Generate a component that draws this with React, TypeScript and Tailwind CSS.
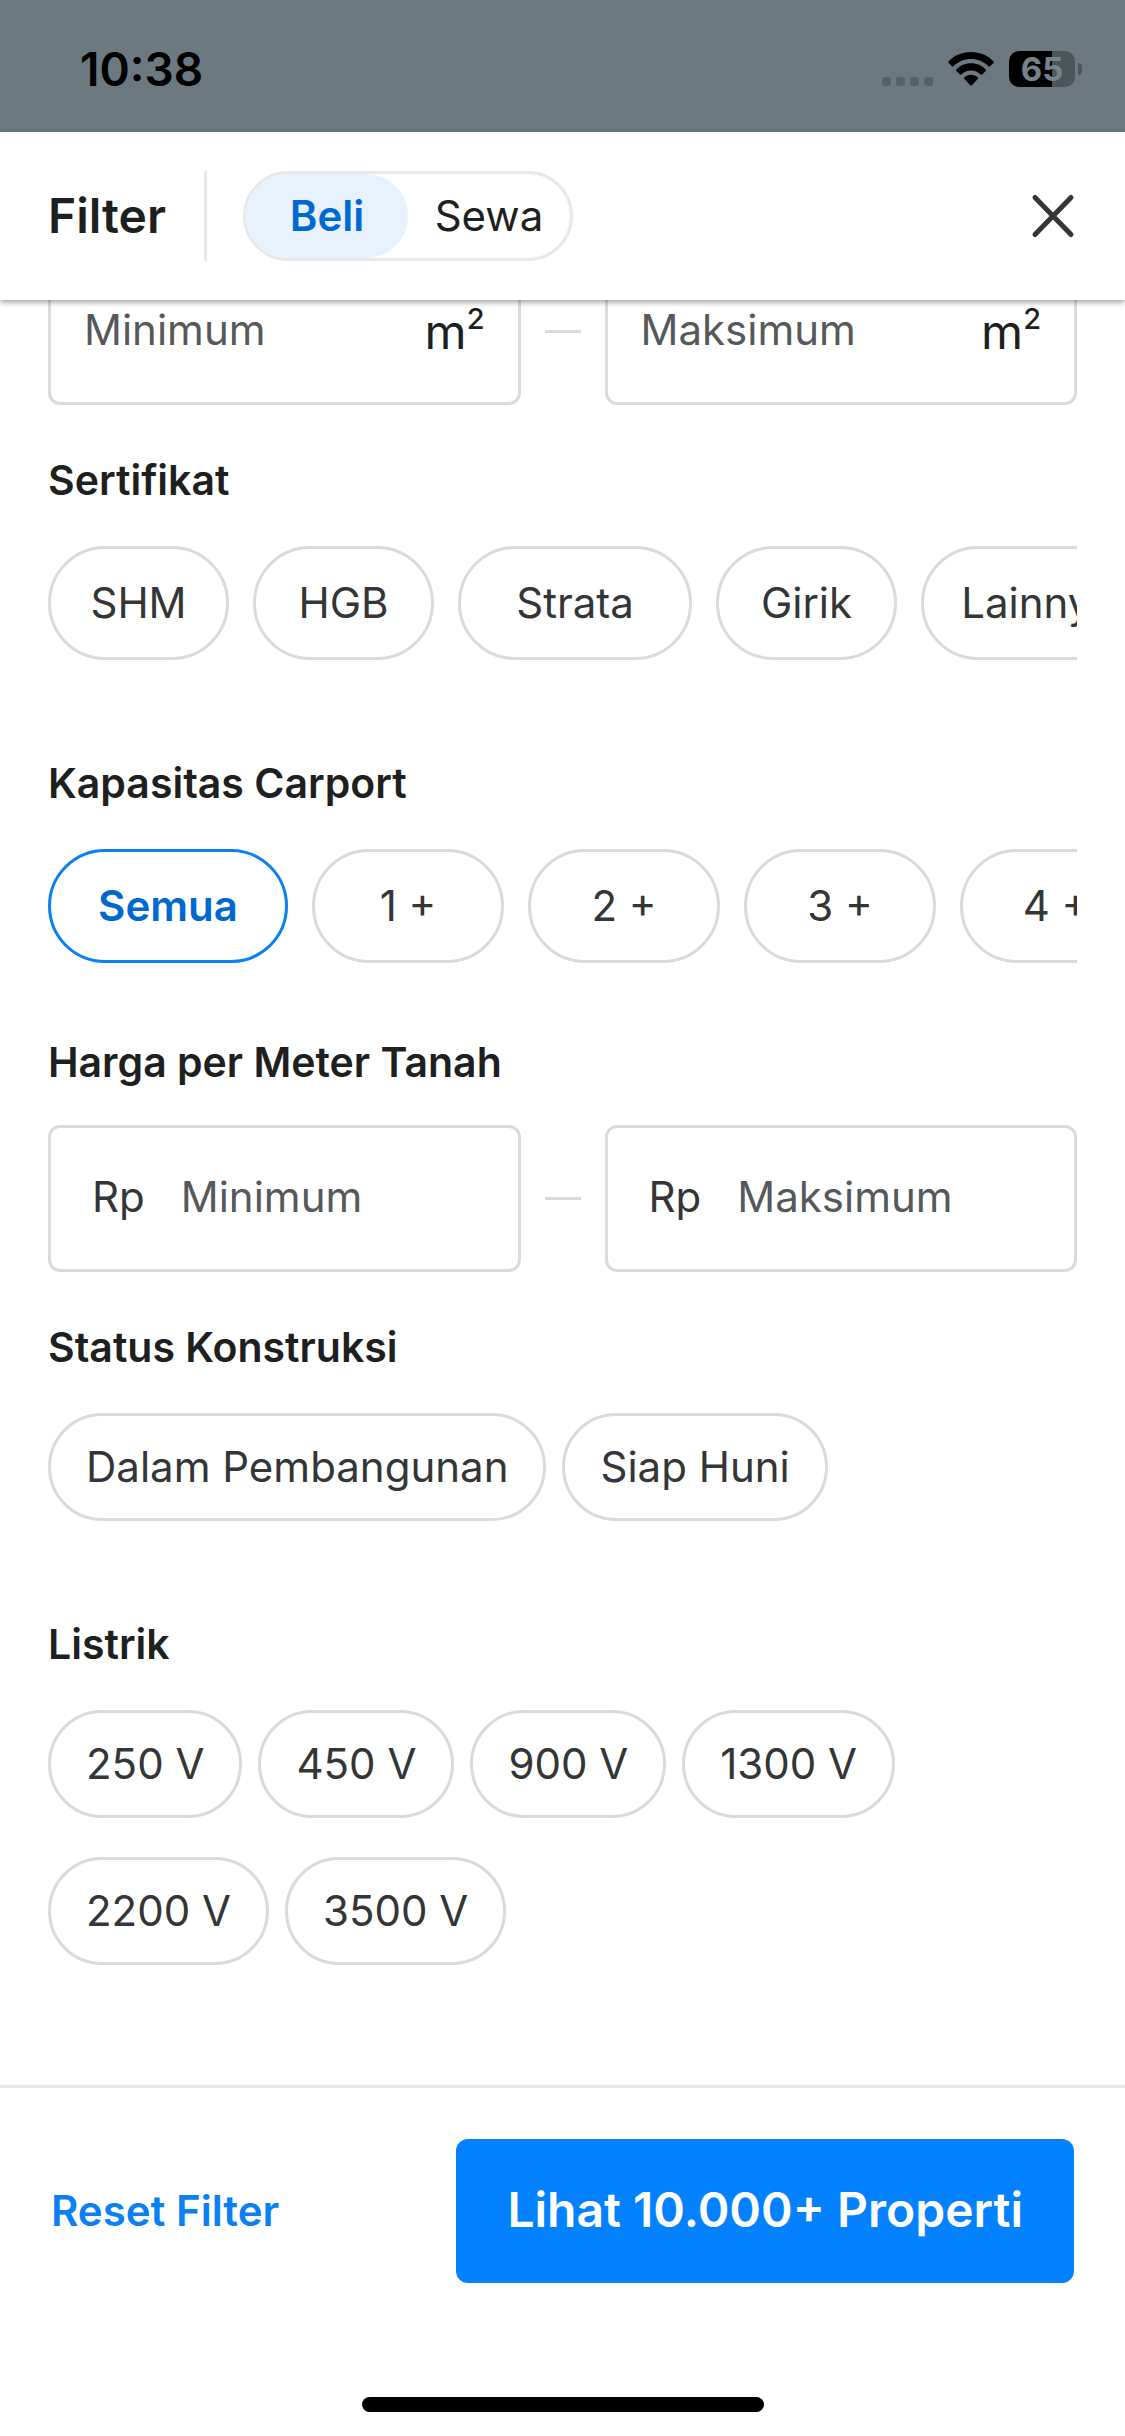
import { useState } from "react";

type Size = "short" | "long" | "all" | "count" | "auto";

const sizeClass: Record<Size, string> = {
  short: "h-[114px] w-[181px]",
  long: "h-[114px] w-[234px]",
  all: "h-[114px] w-60",
  count: "h-[114px] w-48",
  auto: "h-27 px-[35px]",
};

function Chip({
  label,
  size = "auto",
  active,
  onClick,
}: {
  label: string;
  size?: Size;
  active: boolean;
  onClick: () => void;
}) {
  const tone = active
    ? "border-[#0b80f0] font-semibold text-[#0069d1]"
    : "border-[#d9dbdc] text-[#333536]";
  return (
    <button
      type="button"
      aria-pressed={active}
      onClick={onClick}
      className={`shrink-0 rounded-full border-3 whitespace-nowrap ${sizeClass[size]} ${tone}`}
    >
      {label}
    </button>
  );
}

function Heading({ children }: { children: string }) {
  return <h2 className="text-[41px] leading-[60px] font-semibold text-[#1e1f1f]">{children}</h2>;
}

function AmountField({ label, prefix, area }: { label: string; prefix?: string; area?: boolean }) {
  return (
    <label
      className={`flex h-[147px] min-w-0 flex-1 items-center rounded-xl border-3 border-[#d9dbdc] pb-1 ${
        prefix ? "gap-9 px-[41px]" : "px-[33px]"
      }`}
    >
      {prefix && <span className="text-[#333536]">{prefix}</span>}
      <input
        type="text"
        inputMode="numeric"
        aria-label={label}
        placeholder={label}
        className="w-full min-w-0 flex-1 bg-transparent text-[#1e1f1f] outline-none placeholder:text-[#56595b]"
      />
      {area && (
        <span className="pt-1 text-5xl text-[#1e1f1f]">
          m<sup className="-top-5 text-[29px] font-medium">2</sup>
        </span>
      )}
    </label>
  );
}

function RangeFields({ prefix, area }: { prefix?: string; area?: boolean }) {
  return (
    <div className="flex items-center gap-6">
      <AmountField label="Minimum" prefix={prefix} area={area} />
      <span className="h-[3px] w-9 bg-[#d9dbdc]" />
      <AmountField label="Maksimum" prefix={prefix} area={area} />
    </div>
  );
}

function StatusBar() {
  return (
    <div className="flex h-33 items-center justify-between bg-[#6c7980] pr-[43px] pl-20">
      <span className="pt-1.5 text-[46px] leading-none font-semibold text-black">10:38</span>
      <div className="flex items-center pt-1.5">
        <div className="mt-6 mr-[15px] flex gap-[5px]">
          {[0, 1, 2, 3].map((dot) => (
            <span key={dot} className="size-[9px] rounded-[3px] bg-[#54626a]" />
          ))}
        </div>
        <svg className="mr-[15px] h-[34px] w-[46px]" viewBox="0 0 46 34" aria-label="Wi-Fi">
          <path d="M23 0C14 0 6 3.5 .7 9.2c-.5.5-.5 1.200 0 1.700l3.200 3.300c.5.5 1.200.5 1.700 0C10 9.700 16.200 7 23 7s13 2.700 17.400 7.200c.5.5 1.200.5 1.700 0l3.200-3.300c.5-.5.5-1.200 0-1.700C40 3.500 32 0 23 0z" />
          <path d="M23 11.300c-5.800 0-10.900 2.300-14.600 6-.5.5-.5 1.200 0 1.700l3.400 3.400c.4.4 1.100.4 1.600 0 2.500-2.500 5.800-4 9.600-4s7.100 1.500 9.600 4c.5.4 1.200.4 1.600 0l3.400-3.400c.5-.5.5-1.200 0-1.700-3.700-3.700-8.800-6-14.600-6z" />
          <path d="M23 22.700c-2.600 0-4.900 1-6.600 2.600-.5.5-.5 1.200 0 1.700l5.800 6.200c.5.5 1.200.5 1.700 0l5.800-6.200c.5-.5.5-1.200 0-1.700-1.800-1.600-4.100-2.600-6.700-2.600z" />
        </svg>
        <div className="flex h-9 w-[66px] items-center justify-center rounded-[10px] bg-linear-to-r from-black from-65% to-[#4a5659] to-65%">
          <span className="text-[33px] leading-none font-bold text-[#76838a]">65</span>
        </div>
        <span className="ml-[3px] h-3 w-1 rounded-r-full bg-[#4a5659]" />
      </div>
    </div>
  );
}

const certificates: { label: string; size: Size }[] = [
  { label: "SHM", size: "short" },
  { label: "HGB", size: "short" },
  { label: "Strata", size: "long" },
  { label: "Girik", size: "short" },
  { label: "Lainnya", size: "long" },
];
const carports = ["Semua", "1 +", "2 +", "3 +", "4 +"];
const construction = ["Dalam Pembangunan", "Siap Huni"];
const power = ["250 V", "450 V", "900 V", "1300 V", "2200 V", "3500 V"];

export default function App() {
  const [mode, setMode] = useState("Beli");
  const [carport, setCarport] = useState("Semua");
  const [picked, setPicked] = useState<string[]>([]);
  const toggle = (label: string) =>
    setPicked((now) => (now.includes(label) ? now.filter((x) => x !== label) : [...now, label]));

  return (
    <div className="flex min-h-screen flex-col bg-white font-['Inter',sans-serif] text-[42px] leading-[60px]">
      <StatusBar />
      <header className="relative z-10 flex h-42 items-center bg-white px-12 shadow-[0_2px_6px_rgba(0,0,0,0.4)]">
        <h1 className="text-5xl font-semibold text-[#1e1f1f]">Filter</h1>
        <span className="mr-9 ml-[38px] h-[90px] w-[3px] bg-[#e8e9e9]" />
        <div className="flex h-[90px] w-[330px] overflow-hidden rounded-full border-3 border-[#e8e9e9]">
          {["Beli", "Sewa"].map((name) => (
            <button
              key={name}
              type="button"
              aria-pressed={mode === name}
              onClick={() => setMode(name)}
              className={`flex-1 rounded-full ${
                mode === name ? "bg-[#e7f2fe] font-semibold text-[#0069d1]" : "text-[#1e1f1f]"
              }`}
            >
              {name}
            </button>
          ))}
        </div>
        <button type="button" aria-label="Tutup" className="ml-auto">
          <svg className="size-12" viewBox="0 0 48 48" fill="none" stroke="#333536" strokeWidth="5" strokeLinecap="round">
            <path d="M6 5.500 42 42.500M42 5.500 6 42.500" />
          </svg>
        </button>
      </header>

      <main className="-mt-[42px] flex-1 px-12 pb-30">
        <RangeFields area />

        <section className="mt-[45px]">
          <Heading>Sertifikat</Heading>
          <div className="mt-9 flex gap-6 overflow-x-auto [scrollbar-width:none]">
            {certificates.map(({ label, size }) => (
              <Chip key={label} label={label} size={size} active={picked.includes(label)} onClick={() => toggle(label)} />
            ))}
          </div>
        </section>

        <section className="mt-[93px]">
          <Heading>Kapasitas Carport</Heading>
          <div className="mt-9 flex gap-6 overflow-x-auto [scrollbar-width:none]">
            {carports.map((label) => (
              <Chip
                key={label}
                label={label}
                size={label === "Semua" ? "all" : "count"}
                active={carport === label}
                onClick={() => setCarport(label)}
              />
            ))}
          </div>
        </section>

        <section className="mt-[69px]">
          <Heading>Harga per Meter Tanah</Heading>
          <div className="mt-[33px]">
            <RangeFields prefix="Rp" />
          </div>
        </section>

        <section className="mt-[45px]">
          <Heading>Status Konstruksi</Heading>
          <div className="mt-9 flex flex-wrap gap-x-4 gap-y-[39px]">
            {construction.map((label) => (
              <Chip key={label} label={label} active={picked.includes(label)} onClick={() => toggle(label)} />
            ))}
          </div>
        </section>

        <section className="mt-[93px]">
          <Heading>Listrik</Heading>
          <div className="mt-9 flex flex-wrap gap-x-4 gap-y-[39px] pr-30">
            {power.map((label) => (
              <Chip key={label} label={label} active={picked.includes(label)} onClick={() => toggle(label)} />
            ))}
          </div>
        </section>
      </main>

      <footer className="border-t-3 border-[#e8e9e9] px-[51px] pt-[51px] pb-6">
        <div className="flex items-center justify-between">
          <button type="button" className="font-semibold text-[#0b80f5]">
            Reset Filter
          </button>
          <button type="button" className="h-36 rounded-xl bg-[#0381ff] px-[51px] pb-0.5 text-5xl font-semibold text-white">
            Lihat 10.000+ Properti
          </button>
        </div>
        <div className="mx-auto mt-[114px] h-[15px] w-[402px] rounded-full bg-black" />
      </footer>
    </div>
  );
}
